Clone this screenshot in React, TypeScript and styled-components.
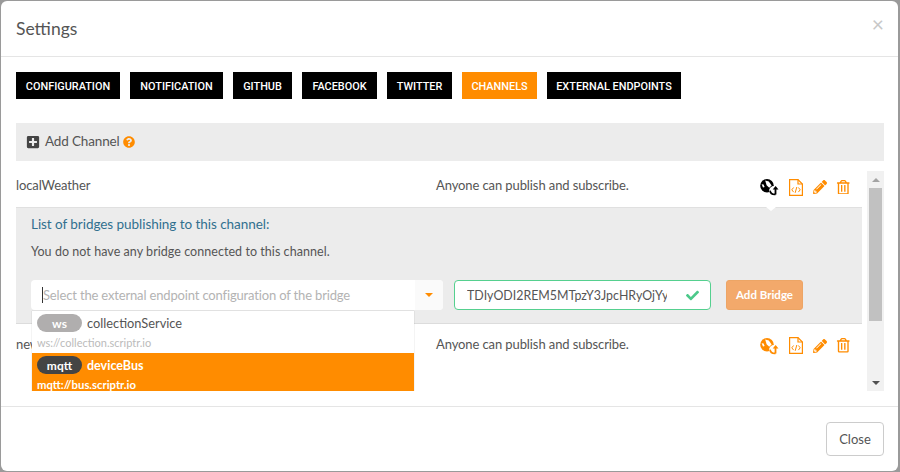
import React from "react";
import styled, { createGlobalStyle } from "styled-components";
import { FaPlusSquare, FaQuestionCircle, FaCheck, FaPencilAlt, FaRegTrashAlt } from "react-icons/fa";

const Global = createGlobalStyle`
  html, body { margin: 0; padding: 0; background: #9a9a9a; }
  * { box-sizing: border-box; }
  body { font-family: "Lato", "Noto Sans", sans-serif; color: #555; width: 900px; height: 472px; overflow: hidden; }
`;

const Page = styled.div`
  width: 900px; height: 472px; padding: 1px 2px 1px 1px;
`;
const Modal = styled.div`
  width: 897px; height: 470px; background: #fff; border-radius: 6px;
  display: flex; flex-direction: column; overflow: hidden;
`;
const Header = styled.div`
  height: 56px; flex: none; border-bottom: 1px solid #e5e5e5; padding: 0 15px;
  display: flex; align-items: center; justify-content: space-between;
`;
const Title = styled.h4`
  margin: 0; font-size: 17.5px; font-weight: 400; color: #555;
`;
const CloseX = styled.span`
  font-size: 21px; font-weight: 400; color: #c8c8c8; line-height: 1; margin: -10px -1px 0 0;
`;
const Body = styled.div`
  flex: none; padding: 15px 14px 0 15px; display: flex; flex-direction: column;
`;
const Tabs = styled.div`
  display: flex; gap: 10px; height: 27px; flex: none;
`;
const Tab = styled.div<{ $active?: boolean; $w: number }>`
  height: 27px; padding-top: 1px; display: flex; align-items: center; justify-content: center; width: ${p => p.$w}px;
  background: ${p => (p.$active ? "#ff8c00" : "#000")}; color: #fff;
  font-family: "Roboto", sans-serif; font-size: 10.9px; font-weight: 500; white-space: nowrap;
`;
const AddBar = styled.div`
  margin-top: 24px; height: 38px; flex: none; background: #ececec; padding: 0 0 3px 10px;
  display: flex; align-items: center; font-size: 13.5px; letter-spacing: -.15px; color: #555;
`;
const AddIcon = styled(FaPlusSquare)`
  color: #444; font-size: 14px; margin: 3px 5px 0 0;
`;
const HelpIcon = styled(FaQuestionCircle)`
  color: #ff8c00; font-size: 12px; margin: 3px 0 0 3px;
`;
const List = styled.div`
  margin-top: 10px; height: 220px; flex: none; display: flex; gap: 5px;
`;
const Rows = styled.div`
  flex: 1; min-width: 0; overflow: hidden;
`;
const Row = styled.div<{ $second?: boolean }>`
  height: 36px; display: flex; align-items: center; font-size: 13px; letter-spacing: -.1px; color: #555;
  padding: ${p => (p.$second ? "3px 0 0" : "0 0 8px")};
`;
const RowName = styled.div`
  width: 420px;
`;
const RowDesc = styled.div`
  flex: 1;
`;
const RowIcons = styled.div`
  width: 102px; display: flex; align-items: center; padding-top: 4px;
`;
const Panel = styled.div`
  position: relative; height: 117px; background: #ececec; border-top: 1px solid #e0e0e0; border-bottom: 1px solid #dcdcdc;
  padding: 7px 15px 0;
`;
const Notch = styled.span`
  position: absolute; top: -1px; left: 750px; width: 0; height: 0;
  border-left: 5px solid transparent; border-right: 5px solid transparent; border-top: 4px solid #fff;
`;
const PanelTitle = styled.div`
  font-size: 13.5px; letter-spacing: -.05px; color: #31708f; line-height: 18px;
`;
const PanelText = styled.div`
  margin-top: 10px; font-size: 12.5px; color: #555; line-height: 17px; letter-spacing: .05px;
`;
const Controls = styled.div`
  margin-top: 20px; display: flex; align-items: flex-start;
`;
const SelectBox = styled.div`
  position: relative; width: 412px; height: 30px; background: #fff; border-radius: 4px; display: flex;
`;
const SelectInput = styled.div`
  flex: 1; display: flex; align-items: center; padding: 0 0 1px 11px; font-size: 13px; color: #b3b3b3; letter-spacing: -.16px;
  white-space: nowrap;
`;
const Cursor = styled.span`
  width: 1px; height: 16px; background: #333;
`;
const CaretBox = styled.div`
  width: 28px; background: #fafafa; border-radius: 0 4px 4px 0; display: flex; align-items: center; justify-content: center;
`;
const Caret = styled.span`
  width: 0; height: 0; border-left: 4px solid transparent; border-right: 4px solid transparent; border-top: 4px solid #ff8c00;
`;
const Dropdown = styled.div`
  position: absolute; left: 1px; top: 31px; width: 382px; height: 80px; background: #fff;
  box-shadow: 0 0 1px rgba(0,0,0,.25); z-index: 2; overflow: hidden;
`;
const Option = styled.div<{ $active?: boolean }>`
  height: ${p => (p.$active ? 38 : 42)}px; padding: 3px 5px 0; background: ${p => (p.$active ? "#ff8c00" : "#fff")};
  color: ${p => (p.$active ? "#fff" : "#555")};
`;
const OptionHead = styled.div<{ $active?: boolean }>`
  display: flex; align-items: center; gap: 5px; height: 18px; font-size: ${p => (p.$active ? 12.5 : 12.8)}px;
  font-weight: ${p => (p.$active ? 700 : 400)};
`;
const Pill = styled.span<{ $dark?: boolean }>`
  width: 45px; height: 18px; border-radius: 9px; display: flex; align-items: center; justify-content: center;
  background: ${p => (p.$dark ? "#444" : "#b0aeae")}; color: #fff; font-size: 12px; font-weight: 700;
`;
const OptionUrl = styled.div<{ $active?: boolean }>`
  margin-top: 4px; font-size: ${p => (p.$active ? 11.3 : 11)}px; line-height: 14px; white-space: nowrap;
  color: ${p => (p.$active ? "#fff" : "#bbb")}; font-weight: ${p => (p.$active ? 700 : 400)};
`;
const KeyInput = styled.div`
  margin-left: 11px; width: 257px; height: 30px; background: #fff; border: 1px solid #55d08f; border-radius: 4px;
  display: flex; align-items: center; padding: 0 11px 0 12px; font-size: 12.4px; color: #555;
`;
const KeyText = styled.span`
  width: 200px; overflow: hidden; white-space: nowrap;
`;
const KeyCheck = styled(FaCheck)`
  color: #4cc98a; font-size: 13px; margin-left: auto;
`;
const AddBridge = styled.div`
  margin-left: 15px; width: 77px; height: 30px; padding-bottom: 1px; background: #f3a96b; border: 1px solid #eda565; border-radius: 3px;
  color: #fff; font-size: 11.5px; font-weight: 700; display: flex; align-items: center; justify-content: center;
`;
const Scrollbar = styled.div`
  width: 17px; flex: none; background: #f1f1f1; display: flex; flex-direction: column; align-items: center;
`;
const ArrowCell = styled.div`
  height: 17px; flex: none; display: flex; align-items: center; justify-content: center;
`;
const ArrowUp = styled.span`
  border-left: 4px solid transparent; border-right: 4px solid transparent; border-bottom: 4px solid #a3a3a3;
`;
const ArrowDown = styled.span`
  border-left: 4px solid transparent; border-right: 4px solid transparent; border-top: 4px solid #505050;
`;
const Thumb = styled.div`
  width: 13px; height: 133px; background: #c1c1c1;
`;
const Track = styled.div`
  flex: 1;
`;
const Footer = styled.div`
  margin-top: 15px; flex: 1; border-top: 1px solid #e5e5e5; padding: 15px 14px 0 0; display: flex; justify-content: flex-end;
`;
const CloseBtn = styled.div`
  width: 58px; height: 34px; border: 1px solid #ccc; border-radius: 4px; background: #fff; color: #555;
  display: flex; align-items: center; justify-content: center; font-size: 13px;
`;

const GlobeSync = ({ color }: { color: string }) => (
  <svg width="19" height="18" viewBox="0 0 19 18">
    <circle cx="7" cy="7.7" r="6.8" fill={color} />
    <path d="M5.2 2.6L8.8 3.4 11.6 7.6 9.2 9.8 6.6 7.2z" fill="#fff" />
    <path d="M1.6 6.2l2 .4 1 2.4-1.6.4z" fill="#fff" />
    <circle cx="14" cy="13" r="5" fill="#fff" />
    <path d="M10 12.6Q10.6 16.8 15.5 16.4" fill="none" stroke={color} strokeWidth="1.7" />
    <path d="M15.5 16.5V10.5" fill="none" stroke={color} strokeWidth="1.8" />
    <path d="M12.7 11.6L15.6 8l2.9 3.6z" fill={color} />
  </svg>
);

const FileCode = styled(({ className }: { className?: string }) => (
  <svg className={className} width="14" height="17" viewBox="0 0 14 17" fill="none" stroke="#ff8c00">
    <path d="M.6.6h8.4l4.4 4.4v11.4H.6z" strokeWidth="1.2" />
    <path d="M9 .6V5h4.4" strokeWidth="1.2" />
    <path d="M4.6 8.5L2.8 10.8l1.8 2.3M9.4 8.5l1.8 2.3-1.8 2.3M7.8 8l-1.6 5.8" strokeWidth="1" />
  </svg>
))`
  margin-left: 10px;
`;

const Pencil = styled(FaPencilAlt)`
  color: #ff8c00; font-size: 14px; margin-left: 10px;
`;
const Trash = styled(FaRegTrashAlt)`
  color: #ff8c00; font-size: 14.5px; margin-left: 9px;
`;

const IconSet = ({ globe }: { globe: string }) => (
  <RowIcons>
    <GlobeSync color={globe} />
    <FileCode />
    <Pencil />
    <Trash />
  </RowIcons>
);

const tabs: [string, number, boolean?][] = [
  ["CONFIGURATION", 104], ["NOTIFICATION", 93], ["GITHUB", 59], ["FACEBOOK", 75],
  ["TWITTER", 65], ["CHANNELS", 75, true], ["EXTERNAL ENDPOINTS", 134],
];

export default function App() {
  return (
    <Page>
      <Global />
      <Modal>
        <Header>
          <Title>Settings</Title>
          <CloseX>×</CloseX>
        </Header>
        <Body>
          <Tabs>
            {tabs.map(([t, w, a]) => <Tab key={t} $w={w} $active={a}>{t}</Tab>)}
          </Tabs>
          <AddBar><AddIcon />Add Channel<HelpIcon /></AddBar>
          <List>
            <Rows>
              <Row>
                <RowName>localWeather</RowName>
                <RowDesc>Anyone can publish and subscribe.</RowDesc>
                <IconSet globe="#000" />
              </Row>
              <Panel>
                <Notch />
                <PanelTitle>List of bridges publishing to this channel:</PanelTitle>
                <PanelText>You do not have any bridge connected to this channel.</PanelText>
                <Controls>
                  <SelectBox>
                    <SelectInput><Cursor />Select the external endpoint configuration of the bridge</SelectInput>
                    <CaretBox><Caret /></CaretBox>
                    <Dropdown>
                      <Option>
                        <OptionHead><Pill>ws</Pill>collectionService</OptionHead>
                        <OptionUrl>ws://collection.scriptr.io</OptionUrl>
                      </Option>
                      <Option $active>
                        <OptionHead $active><Pill $dark>mqtt</Pill>deviceBus</OptionHead>
                        <OptionUrl $active>mqtt://bus.scriptr.io</OptionUrl>
                      </Option>
                    </Dropdown>
                  </SelectBox>
                  <KeyInput><KeyText>TDIyODI2REM5MTpzY3JpcHRyOjYyNTQ</KeyText><KeyCheck /></KeyInput>
                  <AddBridge>Add Bridge</AddBridge>
                </Controls>
              </Panel>
              <Row $second>
                <RowName>newChannel</RowName>
                <RowDesc>Anyone can publish and subscribe.</RowDesc>
                <IconSet globe="#ff8c00" />
              </Row>
            </Rows>
            <Scrollbar>
              <ArrowCell><ArrowUp /></ArrowCell>
              <Thumb />
              <Track />
              <ArrowCell><ArrowDown /></ArrowCell>
            </Scrollbar>
          </List>
        </Body>
        <Footer><CloseBtn>Close</CloseBtn></Footer>
      </Modal>
    </Page>
  );
}
